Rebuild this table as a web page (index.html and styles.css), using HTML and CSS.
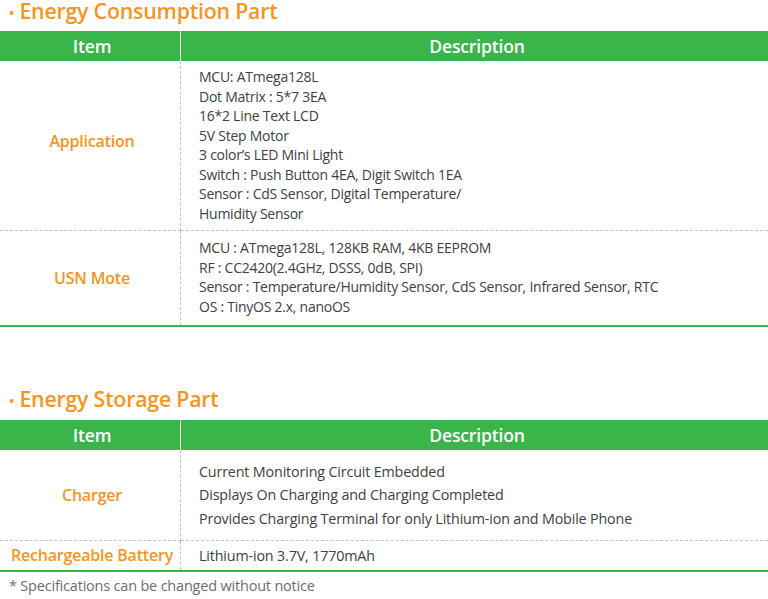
FILE: index.html
```html
<!DOCTYPE html>
<html>
<head>
<meta charset="utf-8">
<link rel="stylesheet" href="styles.css">
</head>
<body>
<section class="part part-first">
  <h2 class="part-title"><span class="bullet">•</span> Energy Consumption Part</h2>
  <table class="spec">
    <thead>
      <tr><th class="col-item">Item</th><th class="col-desc">Description</th></tr>
    </thead>
    <tbody>
      <tr class="row-app">
        <td class="item">Application</td>
        <td class="desc">MCU: ATmega128L<br>Dot Matrix : 5*7 3EA<br>16*2 Line Text LCD<br>5V Step Motor<br>3 color’s LED Mini Light<br>Switch : Push Button 4EA, Digit Switch 1EA<br>Sensor : CdS Sensor, Digital Temperature/<br>Humidity Sensor</td>
      </tr>
      <tr class="row-usn last">
        <td class="item">USN Mote</td>
        <td class="desc">MCU : ATmega128L, 128KB RAM, 4KB EEPROM<br>RF : CC2420(2.4GHz, DSSS, 0dB, SPI)<br>Sensor : Temperature/Humidity Sensor, CdS Sensor, Infrared Sensor, RTC<br>OS : TinyOS 2.x, nanoOS</td>
      </tr>
    </tbody>
  </table>
</section>
<section class="part part-second">
  <h2 class="part-title"><span class="bullet">•</span> Energy Storage Part</h2>
  <table class="spec spec-storage">
    <thead>
      <tr><th class="col-item">Item</th><th class="col-desc">Description</th></tr>
    </thead>
    <tbody>
      <tr class="row-charger">
        <td class="item">Charger</td>
        <td class="desc loose">Current Monitoring Circuit Embedded<br>Displays On Charging and Charging Completed<br>Provides Charging Terminal for only Lithium-ion and Mobile Phone</td>
      </tr>
      <tr class="row-battery last">
        <td class="item">Rechargeable Battery</td>
        <td class="desc">Lithium-ion 3.7V, 1770mAh</td>
      </tr>
    </tbody>
  </table>
  <p class="note">* Specifications can be changed without notice</p>
</section>
</body>
</html>
```
FILE: styles.css
```css
html, body {
  margin: 0;
  padding: 0;
  background: #ffffff;
}
body {
  font-family: "Open Sans", "Liberation Sans", sans-serif;
  width: 768px;
}
.part-title {
  margin: 0;
  height: 31px;
  font-size: 21.3px;
  font-weight: 600;
  line-height: 22px;
  color: #f7941d;
  padding-left: 9px;
  letter-spacing: -0.2px;
}
.part-second {
  margin-top: 61px;
}
.part-second .part-title {
  height: 32px;
}
.bullet {
  font-size: 14px;
  vertical-align: 1px;
}
.spec {
  width: 768px;
  border-collapse: collapse;
  table-layout: fixed;
}
.spec th {
  background: #39b54a;
  color: #ffffff;
  font-size: 17.6px;
  font-weight: 600;
  height: 30px;
  padding: 0;
  line-height: 30px;
  letter-spacing: -0.2px;
}
.spec th.col-item {
  width: 176px;
  border-right: 1px solid #ffffff;
  padding-left: 4px;
}
.spec th.col-desc {
  padding-left: 5px;
}
.spec td {
  padding: 0;
  border-bottom: 1px dashed #c2c2c2;
}
.spec td.item {
  border-right: 1px dashed #c2c2c2;
  text-align: center;
  color: #f7941d;
  font-size: 16px;
  font-weight: 600;
  letter-spacing: -0.2px;
  padding-left: 4px;
}
.spec td.desc {
  color: #414042;
  font-size: 14px;
  line-height: 19.5px;
  padding-left: 18px;
  letter-spacing: -0.25px;
}
.spec-storage td.desc {
  font-size: 14.3px;
  letter-spacing: -0.15px;
}
.spec td.desc.loose {
  line-height: 23.5px;
}
.spec tr.last td {
  border-bottom: 2px solid #39b54a;
}
.row-app td.desc {
  padding-top: 6px;
  padding-bottom: 7px;
}
.row-app td.item {
  padding-bottom: 9px;
}
.row-usn td.desc {
  padding-top: 7px;
  padding-bottom: 9px;
}
.row-charger td.desc {
  padding-top: 9.5px;
  padding-bottom: 10px;
}
.row-battery td {
  height: 27px;
}
.row-battery td.item {
  padding-bottom: 2px;
}
.note {
  margin: 4px 0 0 9px;
  font-size: 14.5px;
  color: #6d6e71;
  letter-spacing: -0.2px;
}
```
